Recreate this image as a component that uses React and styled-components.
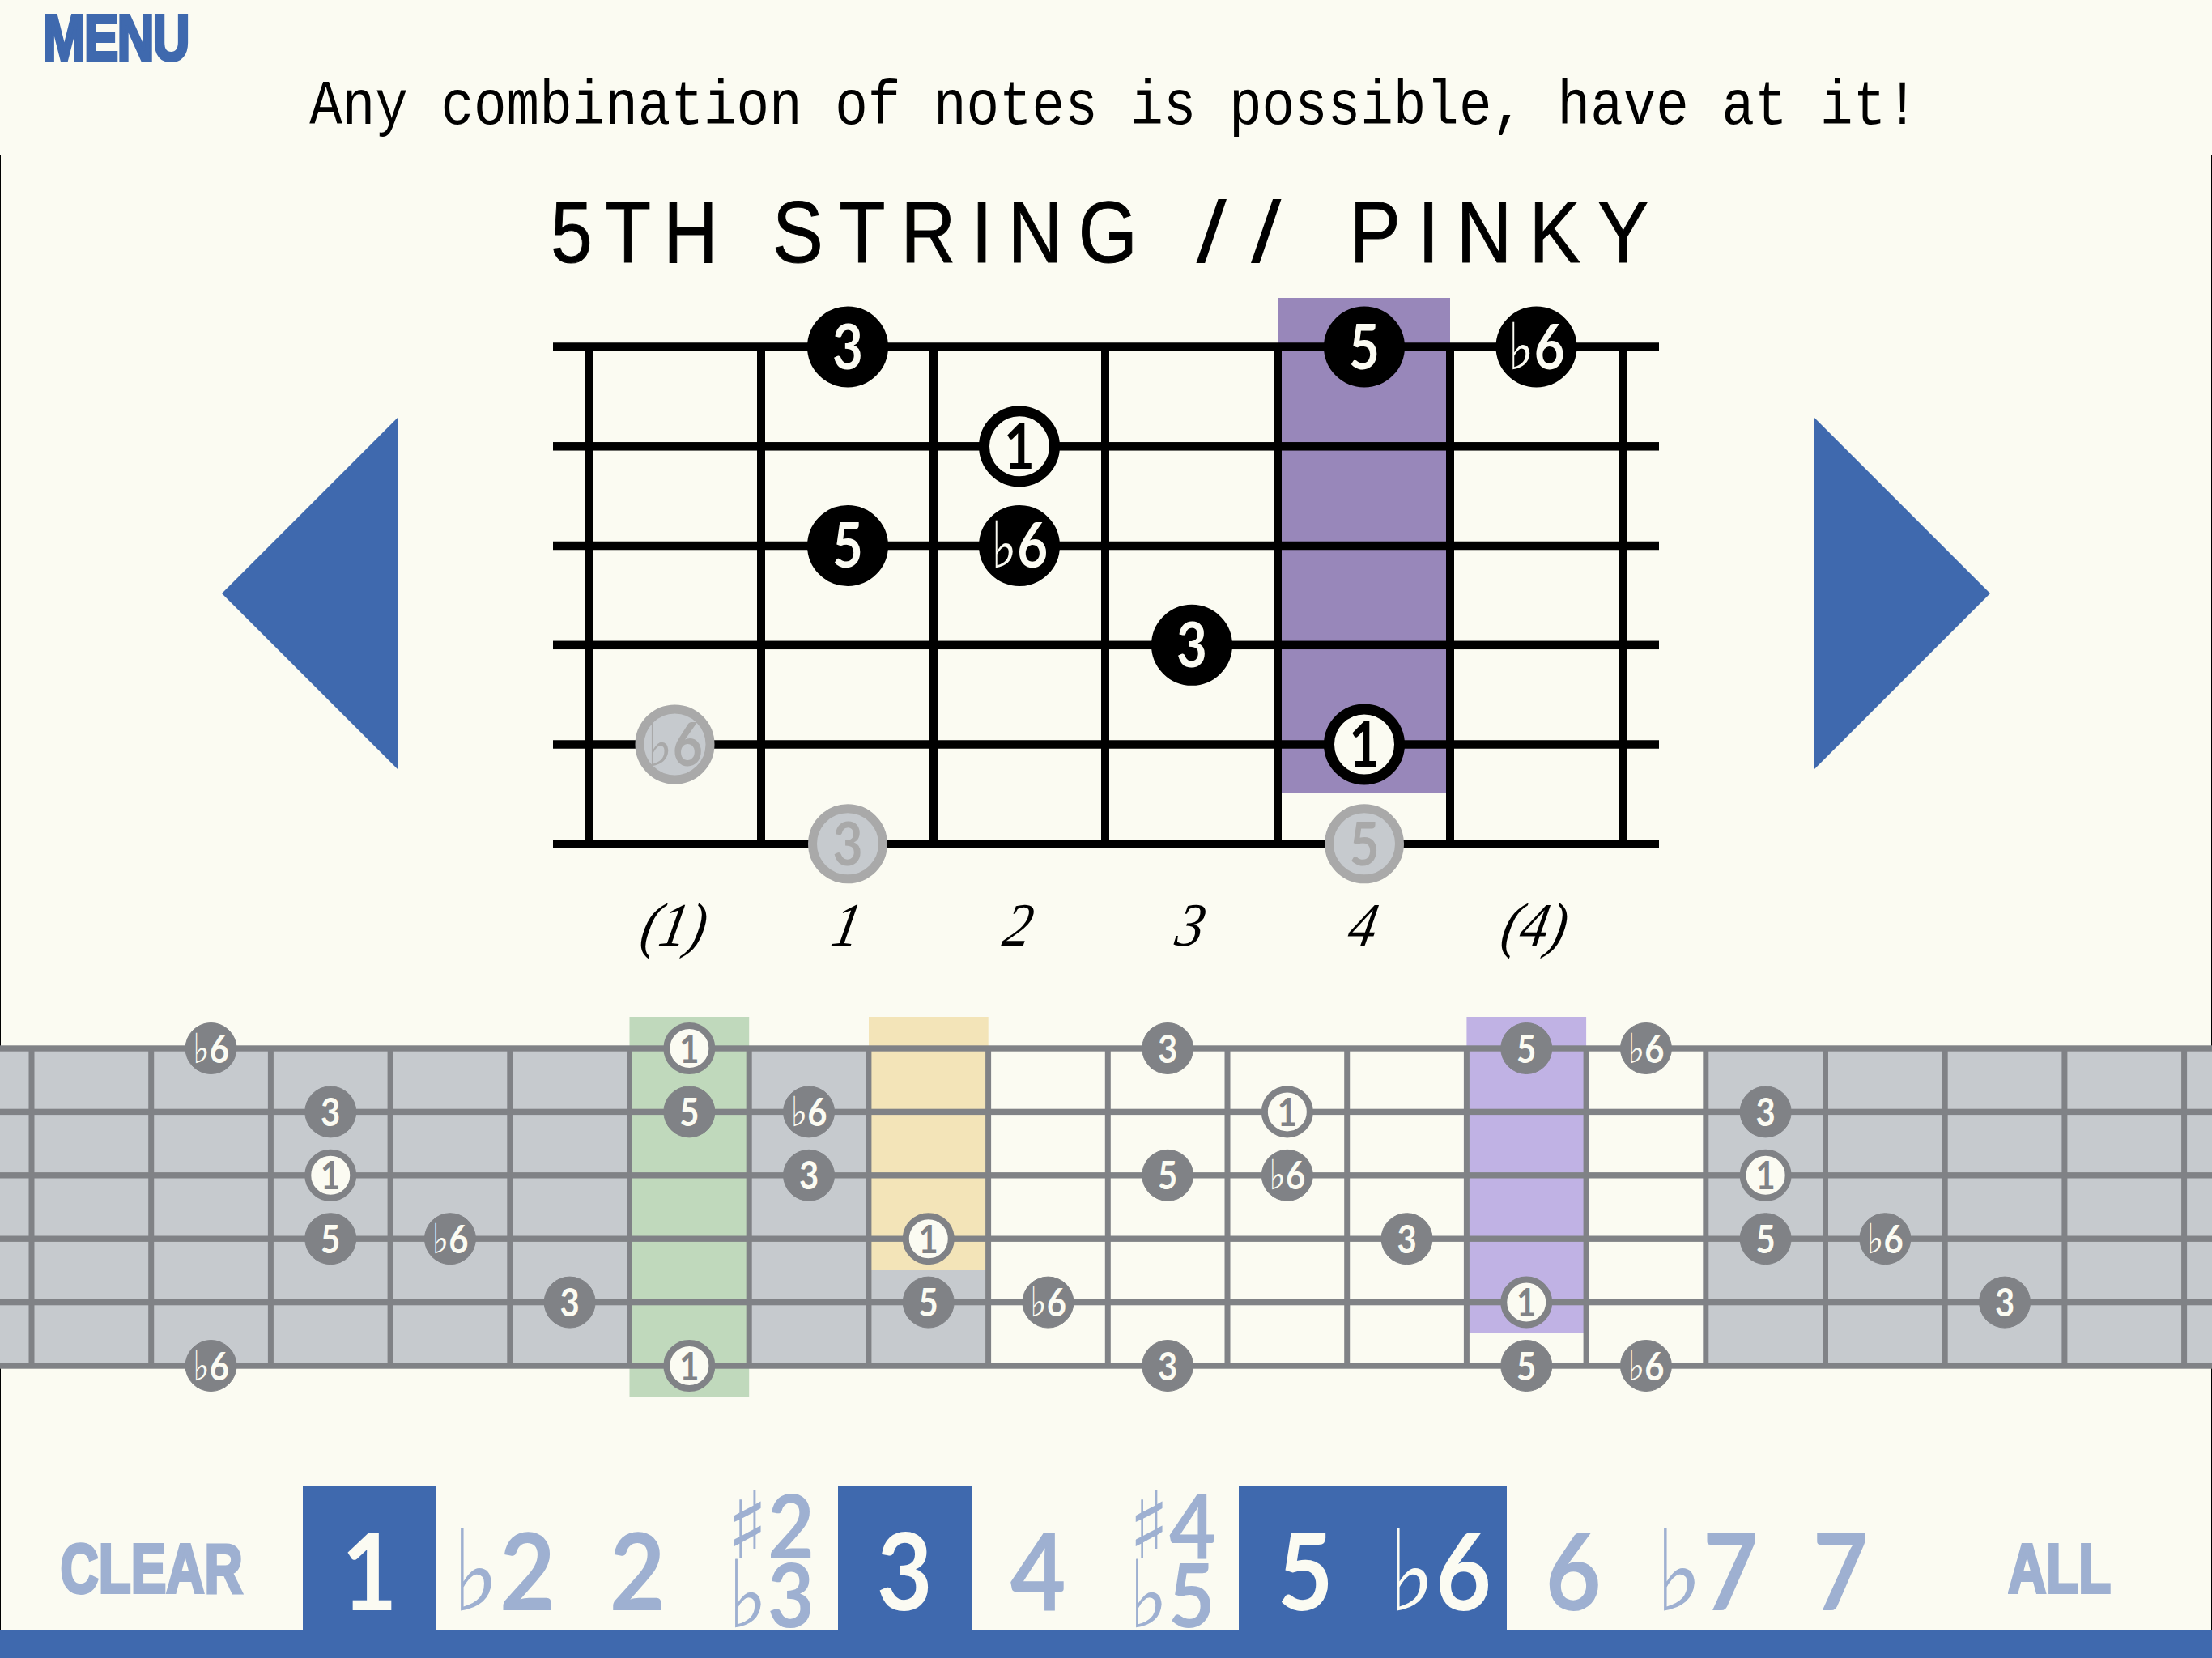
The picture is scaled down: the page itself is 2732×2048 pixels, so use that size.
import React from 'react'
import styled, { createGlobalStyle } from 'styled-components'

const cream = '#fbfbf2'
const blue = '#3f69ae'
const paleBlue = '#9eb0d1'
const heavy = '"Liberation Sans", Arial, sans-serif'
const note = 'Lato, "Noto Sans", sans-serif'
const flatFont = '"DejaVu Sans", sans-serif'

const GlobalStyle = createGlobalStyle`
html, body {
  margin: 0;
  padding: 0;
  background: ${cream};
}
`

const Page = styled.div`
width: 2732px;
height: 2048px;
overflow: hidden;
display: flex;
flex-direction: column;
background: ${cream};
`

const Header = styled.header`
height: 192px;
position: relative;
display: flex;
justify-content: center;
`

const MenuLabel = styled.div`
position: absolute;
left: 53px;
top: 1px;
font-family: ${heavy};
font-weight: 700;
font-size: 80px;
line-height: 92px;
letter-spacing: -2px;
color: ${blue};
transform: scaleX(.79);
transform-origin: left top;
-webkit-text-stroke: 4px ${blue};
`

const Hint = styled.div`
margin-top: 96px;
padding-left: 20px;
font-family: "Liberation Mono", monospace;
font-size: 67.6px;
line-height: 76px;
color: #000;
white-space: pre;
transform: scaleY(1.14);
`

const Main = styled.main`
flex: 1;
display: flex;
flex-direction: column;
box-shadow: inset 1px 0 #000, inset -1px 0 #000;
`

const Title = styled.h1`
margin: 35px 0 5px;
height: 120px;
display: flex;
justify-content: center;
gap: 73px;
font-family: "Liberation Sans", Arial, sans-serif;
font-weight: 400;
font-size: 108px;
line-height: 120px;
color: #000;
`

const TitleWord = styled.span`
width: ${p => p.$width}px;
display: flex;
justify-content: center;
white-space: pre;
letter-spacing: ${p => p.$track}px;
transform: scaleX(${p => p.$scale});
-webkit-text-stroke: ${p => (p.$thin ? 0 : 1)}px #000;
`

const Stage = styled.section`
margin-top: 16px;
height: 730px;
padding: 0 274px;
display: flex;
justify-content: space-between;
align-items: center;
`

const Arrow = styled.svg`
width: 217px;
height: 434px;
fill: ${blue};
`

const Board = styled.svg`
display: block;
flex: none;
`

const FingerRow = styled.div`
margin-top: 9px;
padding-left: 727px;
display: grid;
grid-template-columns: repeat(6, 212.7px);
`

const Finger = styled.div`
text-align: center;
font-family: "Liberation Serif", serif;
font-style: italic;
font-size: 76px;
line-height: 70px;
color: #000;
transform: scaleX(.9) skewX(-12deg);
`

const NeckWrap = styled.div`
margin-top: 79px;
`

const Palette = styled.footer`
margin-top: auto;
height: 212px;
display: flex;
align-items: stretch;
border-bottom: 35px solid ${blue};
box-sizing: border-box;
`

const EdgeButton = styled.div`
width: ${p => p.$width}px;
display: flex;
align-items: flex-end;
justify-content: center;
padding-bottom: 31px;
box-sizing: border-box;
font-family: ${heavy};
font-weight: 700;
font-size: 86px;
line-height: 90px;
color: ${paleBlue};
span {
  display: inline-block;
  transform: scaleX(.76);
  -webkit-text-stroke: 4px ${paleBlue};
}
`

const Chip = styled.div`
width: 165.2px;
display: flex;
flex-direction: column;
align-items: center;
justify-content: center;
padding-top: ${p => (p.$stacked ? 0 : 26)}px;
box-sizing: border-box;
background: ${p => (p.$on ? blue : 'transparent')};
color: ${p => (p.$on ? cream : paleBlue)};
font-family: ${note};
font-weight: 700;
`

const ChipLine = styled.div`
font-size: ${p => (p.$small ? 110 : 132)}px;
line-height: ${p => (p.$small ? 85 : 132)}px;
white-space: pre;
transform: scaleX(.9);
`

const Accidental = styled.span`
font-family: ${flatFont};
font-weight: 400;
font-size: 1.05em;
line-height: 0;
`

const NoteText = styled.text`
font-family: ${note};
font-weight: 700;
font-size: ${p => p.$size}px;
text-anchor: middle;
`

const NoteFlat = styled.tspan`
font-family: ${flatFont};
font-weight: 400;
font-size: 1.05em;
`

const steps = ['1', 'b2', '2', '#2|b3', '3', '4', '#4|b5', '5', 'b6', '6', 'b7', '7']
const active = ['1', '3', '5', 'b6']

const accidental = { b: '♭', '#': '♯' }

const ChipText = ({ text }) => {
  const head = text[0]
  if (accidental[head]) {
    return (
      <>
        <Accidental>{accidental[head]}</Accidental>
        {text.slice(1)}
      </>
    )
  }
  return text
}

const Note = ({ x, y, r, deg, fill, ink, ring, ringWidth, rootFill }) => {
  const isRoot = deg === '1'
  const size = r * 1.52
  const flat = deg[0] === 'b'
  return (
    <g transform={`translate(${x} ${y})`}>
      <circle
        r={r - ringWidth / 2}
        fill={isRoot ? rootFill : fill}
        stroke={ring}
        strokeWidth={ringWidth}
      />
      <g transform="scale(0.86 1)">
        <NoteText $size={size} y={size * 0.36} fill={isRoot ? ink.root : ink.text}>
          {flat ? (
            <>
              <NoteFlat>♭</NoteFlat>
              {deg.slice(1)}
            </>
          ) : (
            deg
          )}
        </NoteText>
      </g>
    </g>
  )
}

// big diagram
const bigFrets = [727, 940, 1153, 1365, 1578, 1791, 2004]
const bigStrings = [428.5, 551.3, 674, 796.8, 919.5, 1042.3]
const bigCols = [833.5, 1047, 1259, 1472, 1685, 1897.5]
const bigNotes = [
  [0, 1, '3'], [0, 4, '5'], [0, 5, 'b6'],
  [1, 2, '1'],
  [2, 1, '5'], [2, 2, 'b6'],
  [3, 3, '3'],
  [4, 4, '1'],
]
const ghostNotes = [
  [4, 0, 'b6'], [5, 1, '3'], [5, 4, '5'],
]

const BigBoard = () => (
  <Board width="1366" height="730" viewBox="683 368 1366 730">
    <rect x="1578" y="368" width="213" height="611" fill="#9887ba" />
    {bigFrets.map(x => (
      <rect key={x} x={x - 5} y="428" width="10" height="614" fill="#000" />
    ))}
    {bigStrings.map(y => (
      <rect key={y} x="683" y={y - 5.25} width="1366" height="10.5" fill="#000" />
    ))}
    {bigNotes.map(([s, c, deg]) => (
      <Note
        key={`${s}-${c}`}
        x={bigCols[c]}
        y={bigStrings[s]}
        r={50}
        deg={deg}
        fill="#000"
        ring="#000"
        ringWidth={deg === '1' ? 13 : 2}
        rootFill={cream}
        ink={{ text: cream, root: '#000' }}
      />
    ))}
    {ghostNotes.map(([s, c, deg]) => (
      <Note
        key={`g${s}-${c}`}
        x={bigCols[c]}
        y={bigStrings[s]}
        r={49}
        deg={deg}
        fill="#c6cace"
        ring="#a9a9a9"
        ringWidth={11}
        rootFill="#c6cace"
        ink={{ text: '#a9a9a9', root: '#a9a9a9' }}
      />
    ))}
  </Board>
)

// full neck
const neckFret = k => 39 + 147.7 * k
const neckCol = k => neckFret(k) + 73.85
const neckStrings = [1295, 1373.4, 1451.8, 1530.2, 1608.6, 1687]
const neckNotes = [
  [0, 1, 'b6'], [0, 5, '1'], [0, 9, '3'], [0, 12, '5'], [0, 13, 'b6'],
  [1, 2, '3'], [1, 5, '5'], [1, 6, 'b6'], [1, 10, '1'], [1, 14, '3'],
  [2, 2, '1'], [2, 6, '3'], [2, 9, '5'], [2, 10, 'b6'], [2, 14, '1'],
  [3, 2, '5'], [3, 3, 'b6'], [3, 7, '1'], [3, 11, '3'], [3, 14, '5'], [3, 15, 'b6'],
  [4, 4, '3'], [4, 7, '5'], [4, 8, 'b6'], [4, 12, '1'], [4, 16, '3'],
  [5, 1, 'b6'], [5, 5, '1'], [5, 9, '3'], [5, 12, '5'], [5, 13, 'b6'],
]

const Neck = () => (
  <Board width="2732" height="470" viewBox="0 1256 2732 470">
    <rect x="0" y="1295" width="1220.6" height="392" fill="#c6cace" />
    <rect x="2106.8" y="1295" width="626" height="392" fill="#c6cace" />
    <rect x="777.5" y="1256" width="147.7" height="470" fill="#c0d9bc" />
    <rect x="1073" y="1256" width="147.7" height="313" fill="#f3e4b8" />
    <rect x="1811.4" y="1256" width="147.7" height="391" fill="#c0b2e4" />
    {Array.from({ length: 19 }, (_, k) => (
      <rect key={k} x={neckFret(k) - 3.5} y="1295" width="7" height="392" fill="#808286" />
    ))}
    {neckStrings.map(y => (
      <rect key={y} x="0" y={y - 3.7} width="2732" height="7.4" fill="#808286" />
    ))}
    {neckNotes.map(([s, c, deg]) => (
      <Note
        key={`${s}-${c}`}
        x={neckCol(c)}
        y={neckStrings[s]}
        r={32}
        deg={deg}
        fill="#808286"
        ring="#808286"
        ringWidth={deg === '1' ? 8 : 1}
        rootFill={cream}
        ink={{ text: cream, root: '#808286' }}
      />
    ))}
  </Board>
)

const App = () => (
  <Page>
    <GlobalStyle />
    <Header>
      <MenuLabel>MENU</MenuLabel>
      <Hint>Any combination of notes is possible, have at it!</Hint>
    </Header>
    <Main>
      <Title>
        <TitleWord $width={206} $track={18} $scale={0.86}>5TH</TitleWord>
        <TitleWord $width={444} $track={22} $scale={0.87}>STRING</TitleWord>
        <TitleWord $width={122} $track={24} $scale={1.25} $thin>//</TitleWord>
        <TitleWord $width={366} $track={24} $scale={0.88}>PINKY</TitleWord>
      </Title>
      <Stage>
        <Arrow viewBox="0 0 217 434"><path d="M217 0V434L0 217Z" /></Arrow>
        <BigBoard />
        <Arrow viewBox="0 0 217 434"><path d="M0 0V434L217 217Z" /></Arrow>
      </Stage>
      <FingerRow>
        {['(1)', '1', '2', '3', '4', '(4)'].map((f, i) => (
          <Finger key={i}>{f}</Finger>
        ))}
      </FingerRow>
      <NeckWrap>
        <Neck />
      </NeckWrap>
      <Palette>
        <EdgeButton $width={374}><span>CLEAR</span></EdgeButton>
        {steps.map(step => (
          <Chip key={step} $on={active.includes(step)} $stacked={step.includes('|')}>
            {step.split('|').map(line => (
              <ChipLine key={line} $small={step.includes('|')}>
                <ChipText text={line} />
              </ChipLine>
            ))}
          </Chip>
        ))}
        <EdgeButton $width={376}><span>ALL</span></EdgeButton>
      </Palette>
    </Main>
  </Page>
)

export default App
